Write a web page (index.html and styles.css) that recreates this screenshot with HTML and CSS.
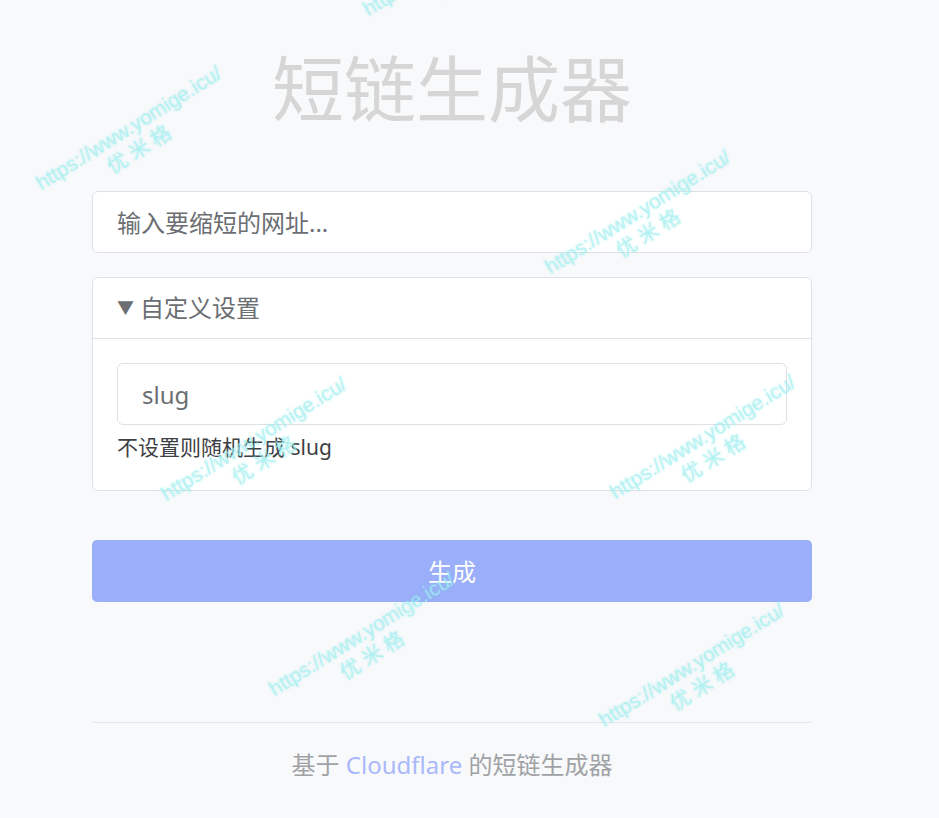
FILE: index.html
```html
<html>
<head>
    <title>短链生成器</title>
    <link rel="stylesheet" href="styles.css">
    <meta charset="UTF-8" />
</head>
<body>
<div class="page">
    <h1 class="title">短链生成器</h1>
    <form class="shorten">
        <input class="field" type="text" placeholder="输入要缩短的网址...">
        <details class="custom" open>
            <summary>自定义设置</summary>
            <div class="custom_body">
                <input class="field" type="text" placeholder="slug">
                <div class="help">不设置则随机生成 slug</div>
            </div>
        </details>
        <button class="submit" type="button">生成</button>
    </form>
    <hr class="rule">
    <div class="footer">基于 <a href="#">Cloudflare</a> 的短链生成器</div>
</div>

<div class="mark" style="left: 135px; top: 138px;">https://www.yomige.icu/<br><span>优米格</span></div>
<div class="mark" style="left: 644px; top: 222px;">https://www.yomige.icu/<br><span>优米格</span></div>
<div class="mark" style="left: 260px; top: 449px;">https://www.yomige.icu/<br><span>优米格</span></div>
<div class="mark" style="left: 709px; top: 447px;">https://www.yomige.icu/<br><span>优米格</span></div>
<div class="mark" style="left: 368px; top: 644px;">https://www.yomige.icu/<br><span>优米格</span></div>
<div class="mark" style="left: 698px; top: 675px;">https://www.yomige.icu/<br><span>优米格</span></div>
<div class="mark" style="left: 462px; top: -36px;">https://www.yomige.icu/<br><span>优米格</span></div>
</body>
</html>
```

FILE: styles.css
```css
body {
margin: 0;
background-color: #f8f9fb;
font-family: "Noto Sans", "Noto Sans CJK SC", sans-serif;
overflow: hidden;
}

.page {
width: 720px;
margin-left: 92px;
padding-top: 52px;
}

.title {
margin: 0;
font-size: 72px;
line-height: 72px;
font-weight: normal;
text-align: center;
color: #d6d6d6;
}

.shorten {
margin: 67px 0 0 0;
}

.field {
display: block;
width: 100%;
height: 62px;
box-sizing: border-box;
padding: 0 24px;
border: 1px solid #dee2e6;
border-radius: 6px;
background-color: white;
font-family: inherit;
font-size: 24px;
outline: none;
}
.field::placeholder {
color: #6b6e72;
}

.custom {
margin-top: 24px;
border: 1px solid #dee2e6;
border-radius: 6px;
background-color: white;
}
.custom summary {
list-style: none;
height: 60px;
line-height: 60px;
padding: 0 24px;
border-bottom: 1px solid #dee2e6;
font-size: 24px;
color: #6b6e72;
}
.custom summary::-webkit-details-marker {
    display: none;
}
.custom summary::before {
    content: "\25BC";
    font-size: 17px;
    margin-right: 6px;
    vertical-align: 3px;
}
.custom_body {
padding: 24px 24px 27px 24px;
}
.help {
margin-top: 6px;
font-size: 21px;
line-height: 32px;
color: #3d4045;
}

.submit {
display: block;
width: 100%;
height: 62px;
margin-top: 49px;
padding-bottom: 3px;
border: none;
border-radius: 5px;
background-color: #9aaef9;
color: white;
font-family: inherit;
font-size: 24px;
}

.rule {
margin: 120px 0 0 0;
border: none;
border-top: 1px solid #e6e7e9;
}

.footer {
margin-top: 23px;
text-align: center;
font-size: 24px;
color: #a0a2a5;
}
.footer a {
    color: #a9b8fb;
    text-decoration: none;
}

.mark {
position: absolute;
transform: translate(-50%, -50%) rotate(-32deg);
font-family: "Liberation Sans", "Noto Sans CJK SC", sans-serif;
font-size: 20.5px;
line-height: 24px;
text-align: center;
white-space: nowrap;
color: rgba(165, 240, 240, 0.7);
text-shadow: 0 0 3px rgba(120, 230, 230, 0.45);
pointer-events: none;
}
.mark span {
    letter-spacing: 5px;
}
```
